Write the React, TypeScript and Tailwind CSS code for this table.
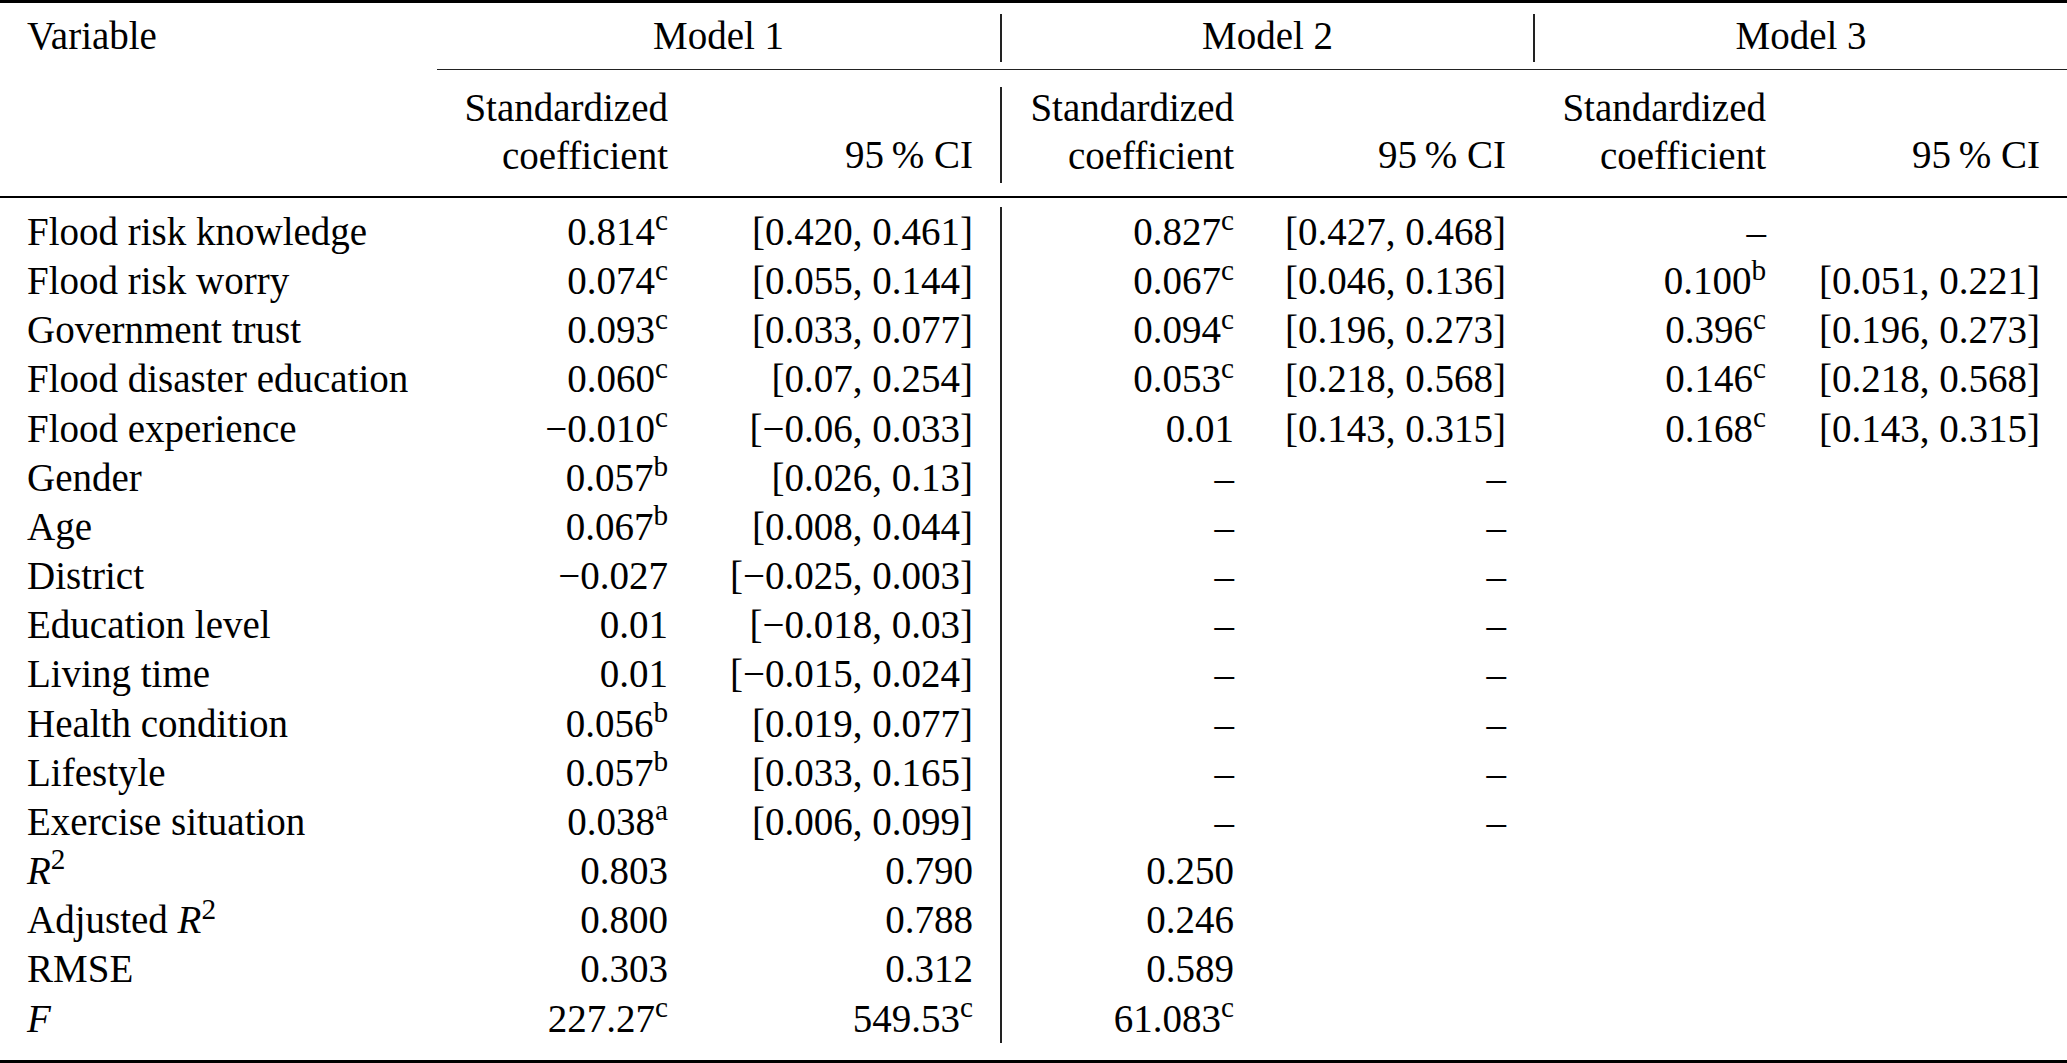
import React from "react";

const M = "\u2212";
const D = "\u2013";

const sup = (n: string, s?: string): React.ReactNode =>
  s ? (
    <>
      {n}
      <sup>{s}</sup>
    </>
  ) : (
    n
  );

const rows: React.ReactNode[][] = [
  ["Flood risk knowledge", sup("0.814", "c"), "[0.420, 0.461]", sup("0.827", "c"), "[0.427, 0.468]", D, ""],
  ["Flood risk worry", sup("0.074", "c"), "[0.055, 0.144]", sup("0.067", "c"), "[0.046, 0.136]", sup("0.100", "b"), "[0.051, 0.221]"],
  ["Government trust", sup("0.093", "c"), "[0.033, 0.077]", sup("0.094", "c"), "[0.196, 0.273]", sup("0.396", "c"), "[0.196, 0.273]"],
  ["Flood disaster education", sup("0.060", "c"), "[0.07, 0.254]", sup("0.053", "c"), "[0.218, 0.568]", sup("0.146", "c"), "[0.218, 0.568]"],
  ["Flood experience", sup(M + "0.010", "c"), `[${M}0.06, 0.033]`, "0.01", "[0.143, 0.315]", sup("0.168", "c"), "[0.143, 0.315]"],
  ["Gender", sup("0.057", "b"), "[0.026, 0.13]", D, D, "", ""],
  ["Age", sup("0.067", "b"), "[0.008, 0.044]", D, D, "", ""],
  ["District", M + "0.027", `[${M}0.025, 0.003]`, D, D, "", ""],
  ["Education level", "0.01", `[${M}0.018, 0.03]`, D, D, "", ""],
  ["Living time", "0.01", `[${M}0.015, 0.024]`, D, D, "", ""],
  ["Health condition", sup("0.056", "b"), "[0.019, 0.077]", D, D, "", ""],
  ["Lifestyle", sup("0.057", "b"), "[0.033, 0.165]", D, D, "", ""],
  ["Exercise situation", sup("0.038", "a"), "[0.006, 0.099]", D, D, "", ""],
  [
    <>
      <i>R</i>
      <sup>2</sup>
    </>,
    "0.803",
    "0.790",
    "0.250",
    "",
    "",
    "",
  ],
  [
    <>
      Adjusted <i>R</i>
      <sup>2</sup>
    </>,
    "0.800",
    "0.788",
    "0.246",
    "",
    "",
    "",
  ],
  ["RMSE", "0.303", "0.312", "0.589", "", "", ""],
  [<i>F</i>, sup("227.27", "c"), sup("549.53", "c"), sup("61.083", "c"), "", "", ""],
];

const GRID = "grid grid-cols-[437px_258px_305px_261px_272px_260px_274px]";

export default function App() {
  return (
    <div className="w-[2067px] h-[1063px] bg-white text-black font-['Liberation_Serif','Times_New_Roman',serif] text-[39px] flex flex-col overflow-hidden">
      {/* top rule */}
      <div className="h-[3px] bg-black shrink-0" />

      {/* header row 1 */}
      <div className={GRID + " h-[66px] shrink-0"}>
        <div className="pl-[27px] pt-[11px] leading-[43px]">Variable</div>
        <div className="col-span-2 text-center mt-[11px] h-[48px] leading-[43px]">Model 1</div>
        <div className="col-span-2 text-center mt-[11px] h-[48px] leading-[43px] border-l-2 border-[#222]">Model 2</div>
        <div className="col-span-2 text-center mt-[11px] h-[48px] leading-[43px] border-l-2 border-[#222]">Model 3</div>
      </div>

      {/* cmidrule */}
      <div className="flex h-px shrink-0">
        <div className="w-[437px]" />
        <div className="flex-1 bg-[#222]" />
      </div>

      {/* header row 2 */}
      <div className={GRID + " h-[126px] shrink-0 leading-[47.6px]"}>
        <div />
        <div className="text-right pr-[27px] pt-[14px]">
          <div>Standardized</div>
          <div>coefficient</div>
        </div>
        <div className="text-right pr-[27px] pt-[61px]">95{"\u2009"}% CI</div>
        <div className="text-right pr-[27px] mt-[17px] h-[96px] border-l-2 border-[#222]">
          <div className="-mt-[3px]">
            <div>Standardized</div>
            <div>coefficient</div>
          </div>
        </div>
        <div className="text-right pr-[27px] pt-[61px]">95{"\u2009"}% CI</div>
        <div className="text-right pr-[27px] pt-[14px]">
          <div>Standardized</div>
          <div>coefficient</div>
        </div>
        <div className="text-right pr-[27px] pt-[61px]">95{"\u2009"}% CI</div>
      </div>

      {/* midrule */}
      <div className="h-[2px] bg-black shrink-0" />

      {/* body */}
      <div className={GRID + " pt-[9px] auto-rows-[49.17px] leading-[49.17px] whitespace-nowrap"}>
        {rows.map((r, i) => (
          <React.Fragment key={i}>
            <div className="pl-[27px]">{r[0]}</div>
            <div className="text-right pr-[27px]">{r[1]}</div>
            <div className="text-right pr-[27px]">{r[2]}</div>
            <div className="text-right pr-[27px] border-l-2 border-[#222]">{r[3]}</div>
            <div className="text-right pr-[27px]">{r[4]}</div>
            <div className="text-right pr-[27px]">{r[5]}</div>
            <div className="text-right pr-[27px]">{r[6]}</div>
          </React.Fragment>
        ))}
      </div>

      <div className="flex-1" />
      {/* bottom rule */}
      <div className="h-[3px] bg-black shrink-0" />
    </div>
  );
}
